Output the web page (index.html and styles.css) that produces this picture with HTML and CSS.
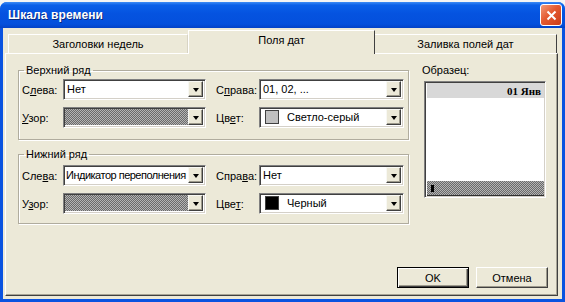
FILE: index.html
```html
<!DOCTYPE html>
<html lang="ru">
   <head>
      <meta charset="UTF-8">
      <title>Шкала времени</title>
      <link rel="stylesheet" href="styles.css">
   </head>
   <body>
      <div class="window">
         <div class="titlebar">
            <span class="title">Шкала времени</span>
            <span class="close">
               <svg width="11" height="11" viewBox="0 0 11 11">
                  <path d="M1.5 1.5l8 8M9.5 1.5l-8 8" stroke="#fff" stroke-width="2" />
               </svg>
            </span>
         </div>
         <div class="client">
            <div class="tabs">
               <div class="tab tab-first">Заголовки недель</div>
               <div class="tab tab-active">Поля дат</div>
               <div class="tab tab-last">Заливка полей дат</div>
            </div>
            <div class="panel">
               <div class="panel-top">
                  <div class="groups">
                     <fieldset class="group">
                        <legend>Верхний ряд</legend>
                        <div class="rows">
                           <span class="lbl">С<u>л</u>ева:</span>
                           <div class="combo"><span class="field">Нет</span><span class="drop"></span></div>
                           <span class="lbl lbl-r">С<u>п</u>рава:</span>
                           <div class="combo"><span class="field">01, 02, ...</span><span class="drop"></span></div>

                           <span class="lbl"><u>У</u>зор:</span>
                           <div class="combo"><span class="field pattern"></span><span class="drop"></span></div>
                           <span class="lbl lbl-r">Цв<u>е</u>т:</span>
                           <div class="combo"><span class="field color"><i class="swatch light"></i>Светло-серый</span><span class="drop"></span></div>
                        </div>
                     </fieldset>
                     <fieldset class="group group-low">
                        <legend>Нижний ряд</legend>
                        <div class="rows">
                           <span class="lbl">Сле<u>в</u>а:</span>
                           <div class="combo"><span class="field tight">Индикатор переполнения</span><span class="drop"></span></div>
                           <span class="lbl lbl-r">Спра<u>в</u>а:</span>
                           <div class="combo"><span class="field">Нет</span><span class="drop"></span></div>

                           <span class="lbl">У<u>з</u>ор:</span>
                           <div class="combo"><span class="field pattern"></span><span class="drop"></span></div>
                           <span class="lbl lbl-r">Цве<u>т</u>:</span>
                           <div class="combo"><span class="field color"><i class="swatch black"></i>Черный</span><span class="drop"></span></div>
                        </div>
                     </fieldset>
                  </div>
                  <div class="sample">
                     <div class="sample-label">Образец:</div>
                     <div class="sample-box">
                        <div class="sample-head">01 Янв</div>
                        <div class="sample-body"></div>
                        <div class="sample-foot"><i class="mark"></i></div>
                     </div>
                  </div>
               </div>
               <div class="buttons">
                  <button class="btn btn-default">OK</button>
                  <button class="btn">Отмена</button>
               </div>
            </div>
         </div>
      </div>
   </body>
</html>
```

FILE: styles.css
```css
body {
    margin: 0;
    background: #f4f4f4;
    font-family: "Liberation Sans", Arial, sans-serif;
    font-size: 11px;
    color: #000;
}
/* Window frame */
.window {
    width: 565px;
    height: 300px;
    margin-top: 2px;
    box-sizing: border-box;
    display: flex;
    flex-direction: column;
    padding: 0 3px 3px;
    background: #0a53e0;
    border-radius: 7px 7px 0 0;
}
.titlebar {
    height: 26px;
    display: flex;
    align-items: center;
    justify-content: space-between;
    margin: 0 -3px;
    padding: 0 3px 0 8px;
    border-radius: 7px 7px 0 0;
    background: linear-gradient(#3d8cf5 0, #0a5fe8 12%, #0553e0 45%, #0450dc 85%, #0342c6 100%);
}
.title {
    color: #fff;
    font-weight: bold;
    font-size: 12px;
    letter-spacing: 0.1px;
    text-shadow: 1px 1px 0 #0a2a80;
}
.close {
    width: 20px;
    height: 20px;
    display: flex;
    align-items: center;
    justify-content: center;
    border: 1px solid #fff;
    border-radius: 3px;
    background: linear-gradient(135deg, #f29a78 0, #e45a30 45%, #cc3c18 100%);
}
.client {
    flex: 1;
    display: flex;
    flex-direction: column;
    background: #ece9d8;
    padding: 2px 4px 3px 2px;
}
/* Tabs */
.tabs {
    display: flex;
    align-items: flex-end;
    height: 23px;
    margin-left: 3px;
}
.tab {
    height: 19px;
    box-sizing: border-box;
    display: flex;
    align-items: center;
    justify-content: center;
    border-top: 1px solid #fff;
    border-left: 1px solid #fff;
    border-right: 1px solid #d8d4c4;
    background: #ece9d8;
}
.tab-first {
    width: 180px;
}
.tab-active {
    width: 187px;
    height: 24px;
    margin-bottom: -1px;
    padding-bottom: 5px;
    border-right: 1px solid #404040;
    position: relative;
    z-index: 1;
}
.tab-last {
    width: 182px;
    border-left: none;
    border-right: 1px solid #404040;
}
.panel {
    flex: 1;
    display: flex;
    flex-direction: column;
    padding: 10px 9px 7px 12px;
    border-top: 1px solid #fff;
    border-left: 1px solid #fff;
    border-right: 1px solid #404040;
    border-bottom: 1px solid #404040;
    box-shadow: inset -1px -1px 0 #a8a597;
}
.panel-top {
    display: grid;
    grid-template-columns: 391px 126px;
    column-gap: 13px;
    align-items: start;
}
/* Group boxes */
.group {
    margin: 0;
    padding: 2px 3px 11px 3px;
    border: 1px solid #b0ac9e;
    box-shadow: 1px 1px 0 #fff, inset 1px 1px 0 #fff;
}
.group legend {
    padding: 0 2px;
    margin-left: 2px;
    line-height: 13px;
}
.group-low {
    margin-top: 8px;
    padding-top: 4px;
    padding-bottom: 9px;
}
.rows {
    display: grid;
    grid-template-columns: 41px 143px 53px 145px;
    grid-auto-rows: 21px;
    row-gap: 7px;
    align-items: center;
}
.lbl-r {
    padding-left: 10px;
}
/* Combo boxes */
.combo {
    height: 21px;
    box-sizing: border-box;
    display: flex;
    border-top: 1px solid #808080;
    border-left: 1px solid #808080;
    border-right: 1px solid #fff;
    border-bottom: 1px solid #fff;
    box-shadow: inset 1px 1px 0 #404040, inset -1px -1px 0 #d4d0c8;
    padding: 1px 2px 2px 1px;
    background: #fff;
}
.field {
    flex: 1;
    display: flex;
    align-items: center;
    padding-left: 2px;
    white-space: nowrap;
    overflow: hidden;
}
.tight {
    padding-left: 1px;
    letter-spacing: -0.5px;
}
.pattern {
    padding: 0;
    background: repeating-conic-gradient(#6a6a6a 0 25%, #b4b4b4 0 50%) 0 0 / 2px 2px;
}
.color {
    padding-left: 4px;
}
.swatch {
    width: 14px;
    height: 14px;
    box-sizing: border-box;
    margin-right: 8px;
    border: 1px solid #404040;
}
.light {
    background: #c0c0c0;
}
.black {
    background: #000;
}
.drop {
    width: 15px;
    box-sizing: border-box;
    display: flex;
    align-items: center;
    justify-content: center;
    background: #ece9d8;
    border-top: 1px solid #f8f8f4;
    border-left: 1px solid #f8f8f4;
    border-right: 1px solid #404040;
    border-bottom: 1px solid #404040;
    box-shadow: inset -1px -1px 0 #9d9a8c;
}
.drop::after {
    content: "";
    border-left: 3.5px solid transparent;
    border-right: 3.5px solid transparent;
    border-top: 4px solid #000;
    margin-top: 1px;
}
/* Sample preview */
.sample-label {
    line-height: 13px;
    margin-bottom: 4px;
}
.sample-box {
    width: 122px;
    height: 117px;
    margin-left: 2px;
    box-sizing: border-box;
    display: flex;
    flex-direction: column;
    border-top: 1px solid #808080;
    border-left: 1px solid #808080;
    border-right: 1px solid #fff;
    border-bottom: 1px solid #fff;
    box-shadow: inset 1px 1px 0 #404040, inset -1px -1px 0 #d4d0c8;
    padding: 1px 1px 1px 2px;
    background: #fff;
}
.sample-head {
    height: 15px;
    display: flex;
    align-items: center;
    justify-content: flex-end;
    padding-right: 3px;
    background: #d8d8d8;
    font-family: "Liberation Serif", "Times New Roman", serif;
    font-weight: bold;
    font-size: 11px;
}
.sample-body {
    flex: 1;
}
.sample-foot {
    height: 14px;
    display: flex;
    align-items: center;
    padding-left: 4px;
    border-bottom: 1px solid #303030;
    background: repeating-conic-gradient(#6a6a6a 0 25%, #b4b4b4 0 50%) 0 0 / 2px 2px;
}
.mark {
    width: 3px;
    height: 7px;
    background: #000;
}
/* Buttons */
.buttons {
    margin-top: auto;
    display: flex;
    justify-content: flex-end;
    gap: 7px;
}
.btn {
    width: 72px;
    height: 21px;
    padding: 0;
    font-family: inherit;
    font-size: 11px;
    color: #000;
    background: #ece9d8;
    border-top: 1px solid #fff;
    border-left: 1px solid #fff;
    border-right: 1px solid #404040;
    border-bottom: 1px solid #404040;
    box-shadow: inset -1px -1px 0 #9d9a8c;
}
.btn-default {
    border: 1px solid #000;
    box-shadow: inset 1px 1px 0 #fff, inset -1px -1px 0 #404040, inset -2px -2px 0 #9d9a8c;
}
```
